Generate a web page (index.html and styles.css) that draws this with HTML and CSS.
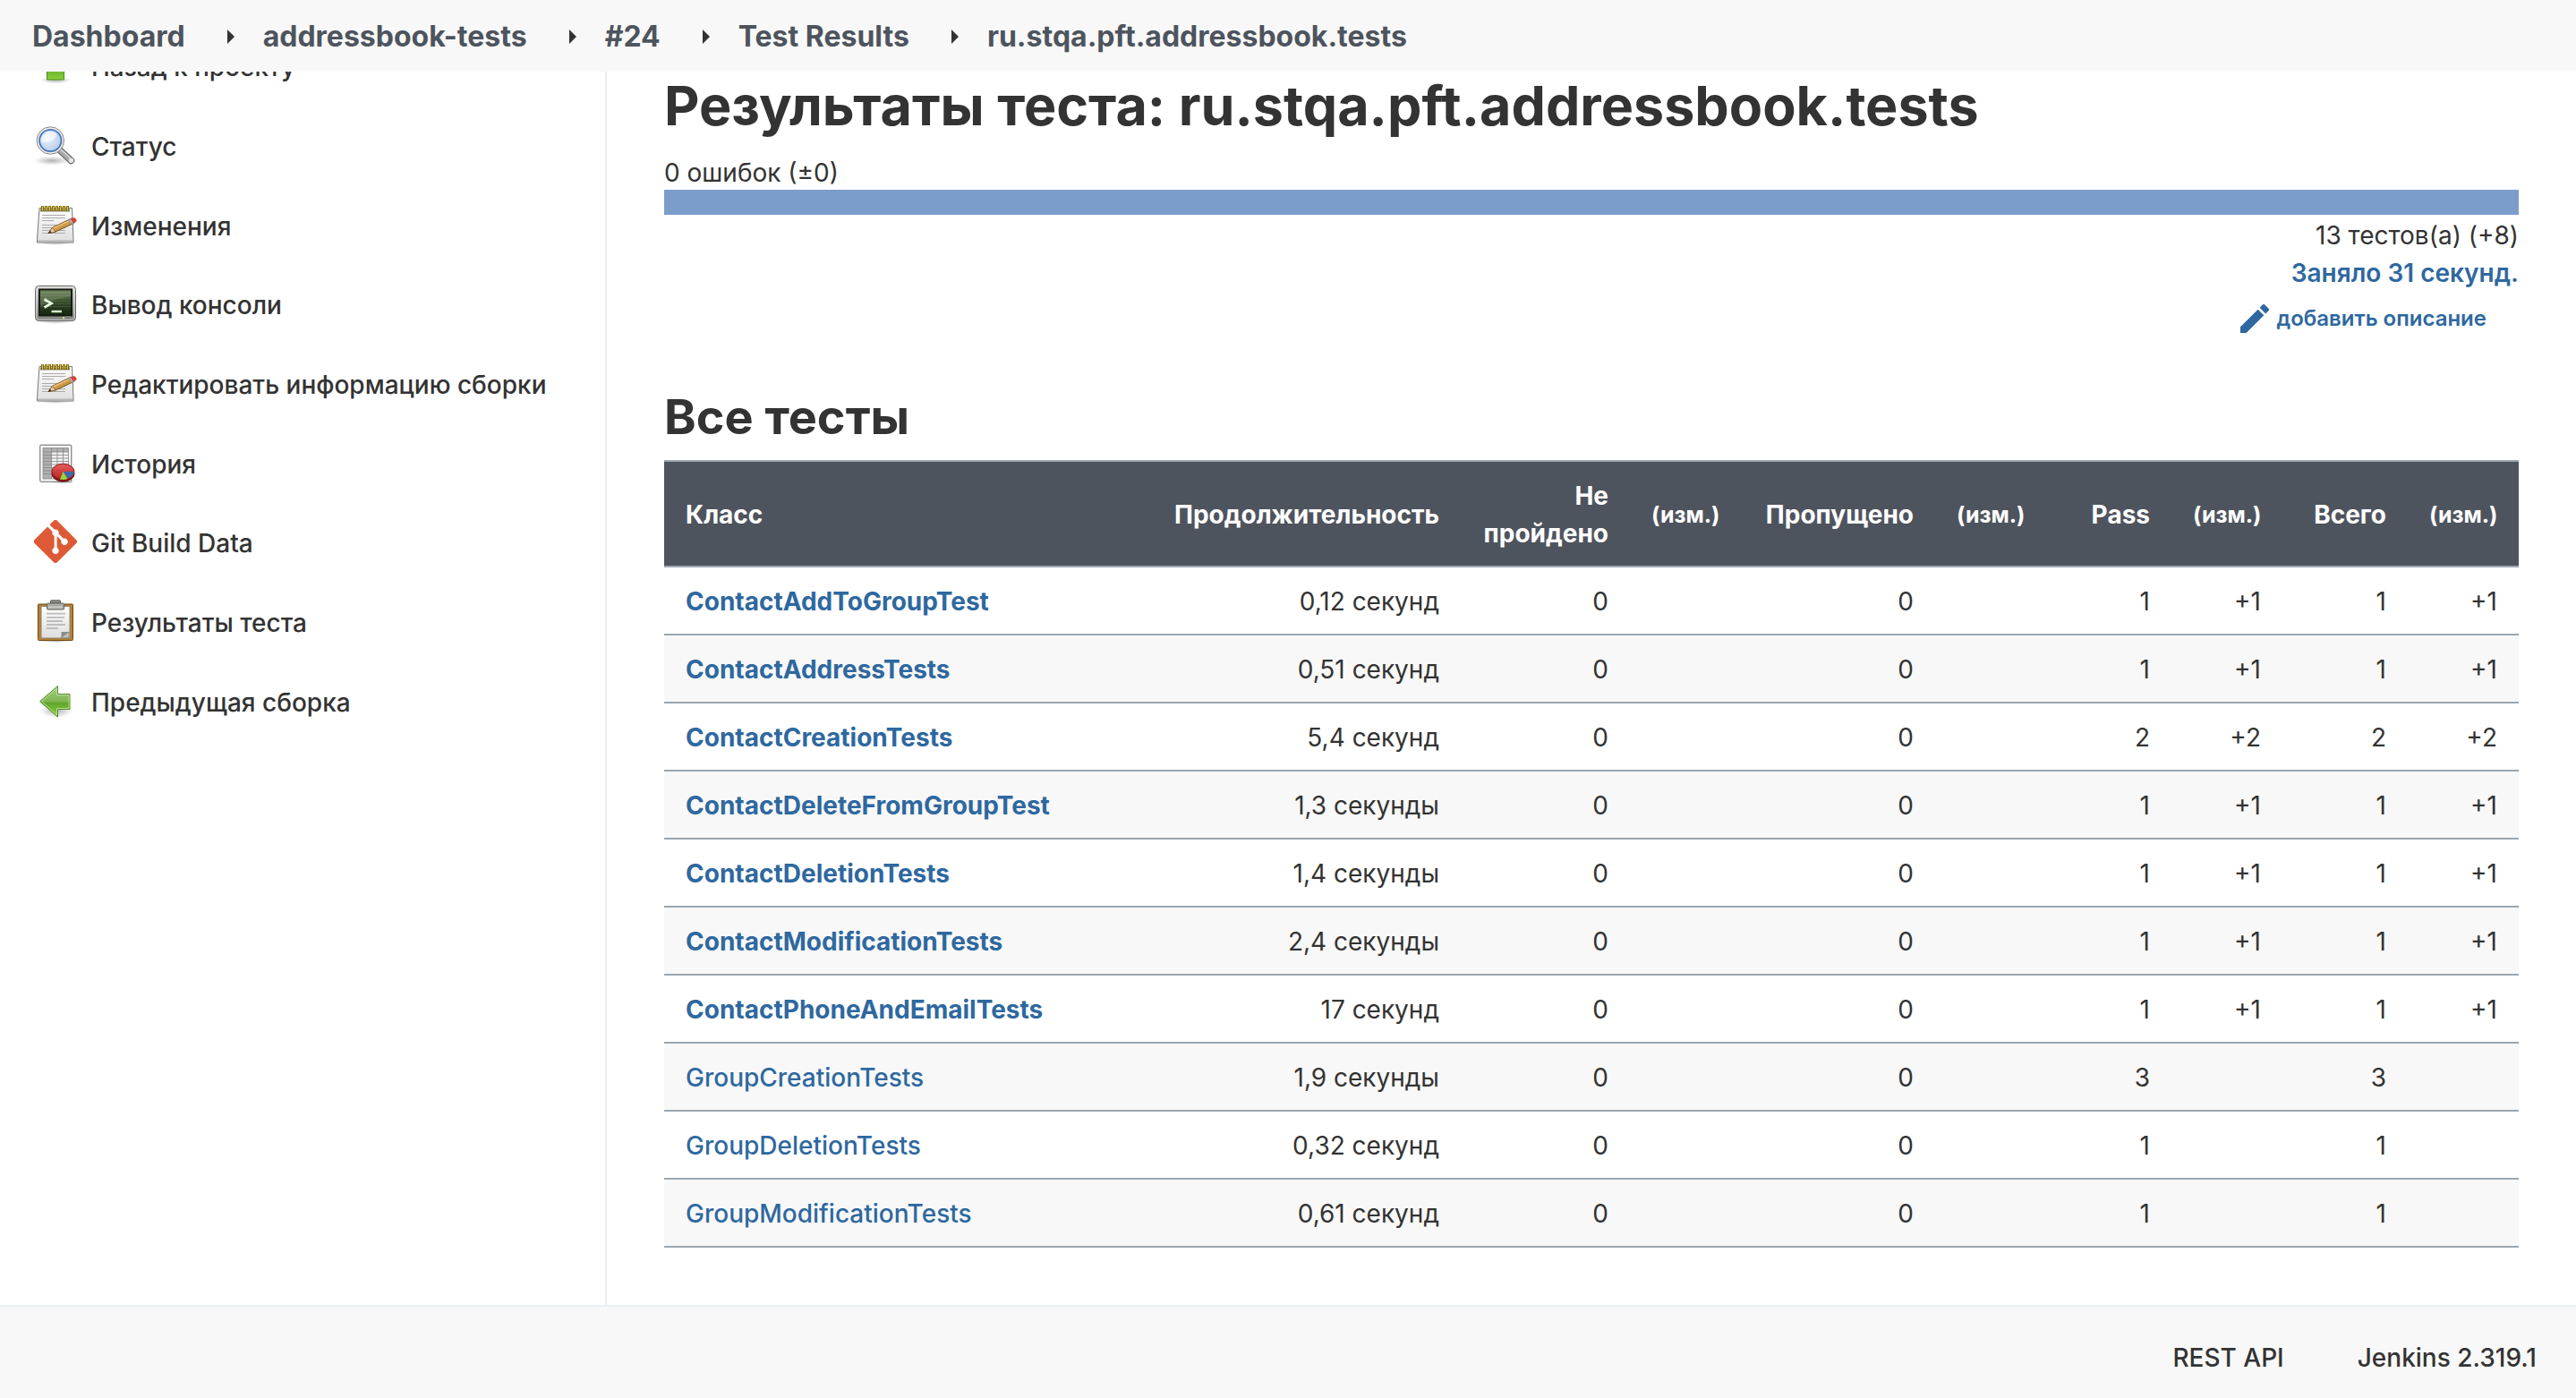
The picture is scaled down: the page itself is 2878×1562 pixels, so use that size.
FILE: index.html
```html
<!DOCTYPE html>
<html lang="ru">
<head>
<meta charset="utf-8">
<title>Результаты теста: ru.stqa.pft.addressbook.tests [Jenkins]</title>
<link rel="stylesheet" href="styles.css">
</head>
<body>
<svg class="defs" aria-hidden="true">
  <defs>
    <linearGradient id="g-green" x1="0" y1="0" x2="0" y2="1"><stop offset="0" stop-color="#a5cf80"/><stop offset=".5" stop-color="#7fb552"/><stop offset=".55" stop-color="#62a52b"/><stop offset="1" stop-color="#86d03c"/></linearGradient>
    <linearGradient id="g-paper" x1="0" y1="0" x2="0" y2="1"><stop offset="0" stop-color="#fdfdfd"/><stop offset="1" stop-color="#dedede"/></linearGradient>
    <linearGradient id="g-frame" x1="0" y1="0" x2="0" y2="1"><stop offset="0" stop-color="#d9d9d6"/><stop offset="1" stop-color="#82847e"/></linearGradient>
    <linearGradient id="g-screen" x1="0" y1="0" x2="0" y2="1"><stop offset="0" stop-color="#5f7a48"/><stop offset=".5" stop-color="#33482a"/><stop offset="1" stop-color="#16240f"/></linearGradient>
    <radialGradient id="g-lens" cx=".4" cy=".4" r=".6"><stop offset="0" stop-color="#eef3fa"/><stop offset="1" stop-color="#b9cdea"/></radialGradient>
    <radialGradient id="g-shadow"><stop offset="0" stop-color="#000" stop-opacity=".3"/><stop offset="1" stop-color="#000" stop-opacity="0"/></radialGradient>
    <linearGradient id="g-pie" x1="0" y1="0" x2="0" y2="1"><stop offset="0" stop-color="#e56060"/><stop offset="1" stop-color="#b81f1f"/></linearGradient>
    <symbol id="i-notepad" viewBox="0 0 48 48">
      <ellipse cx="24" cy="44" rx="20" ry="3" fill="url(#g-shadow)"/>
      <path d="M6 5.500h36.500l1.500 35v3.500H3.500v-3.500z" fill="url(#g-paper)" stroke="#77777a"/>
      <path d="M4 41.500h39.500v2H4z" fill="#b5b5b5"/>
      <path d="M9 13.500h26M9 16.500h26M9 19.500h13M9 24.500h26M9 27.500h26M9 30.500h26M9 33.500h26" stroke="#ababab"/>
      <path d="M7 6.500h33v3H7z" fill="#8b8b86"/>
      <path d="M9.500 3v6M13.500 3v6M17.500 3v6M21.500 3v6M25.500 3v6M29.500 3v6M33.500 3v6M37.500 3v6" stroke="#7c6508" stroke-width="3"/>
      <path d="M9.500 3.500v5M13.500 3.500v5M17.500 3.500v5M21.500 3.500v5M25.500 3.500v5M29.500 3.500v5M33.500 3.500v5M37.500 3.500v5" stroke="#e9cf3e"/>
      <path d="M16 33.500l4.500-6.200L41 17.500l3.500 4.800L24 32z" fill="#d09a45" stroke="#70481a"/>
      <path d="M21 28.200L41 18.800" stroke="#efc98a" stroke-width="1.300"/>
      <path d="M16 33.500l4.500-6.200L24 32z" fill="#ead1a8" stroke="#70481a" stroke-width=".7"/>
      <path d="M16 33.500l2-2.700 1.300 1.700z" fill="#222"/>
      <path d="M38.500 18.700l2.500-1.200 3.500 4.800-2.500 1.200z" fill="#b7b7b7" stroke="#777" stroke-width=".6"/>
      <path d="M41 17.500l2.500-1c2.500-.8 5 2.800 3 4.500l-2 1.300z" fill="#e63a35" stroke="#a85a50" stroke-width=".7"/>
    </symbol>
  </defs>
</svg>

<header class="breadcrumbs">
  <nav aria-label="Breadcrumb">
    <ol class="crumbs">
      <li><a href="#">Dashboard</a></li>
      <li><a href="#">addressbook-tests</a></li>
      <li><a href="#">#24</a></li>
      <li><a href="#">Test Results</a></li>
      <li><a href="#">ru.stqa.pft.addressbook.tests</a></li>
    </ol>
  </nav>
</header>

<div class="page">
  <nav class="side" aria-label="Tasks">
    <ul class="tasks">
      <li><a href="#"><svg class="icon" viewBox="0 0 48 48"><ellipse cx="24" cy="40.500" rx="17" ry="4" fill="url(#g-shadow)"/><path d="M24 6l18 18h-8.500v16h-19V24H6z" fill="url(#g-green)" stroke="#4f8a1e"/></svg><span>Назад к проекту</span></a></li>
      <li><a href="#"><svg class="icon" viewBox="0 0 48 48"><ellipse cx="20" cy="41.500" rx="20" ry="5" fill="url(#g-shadow)"/><path d="M28.500 29.500l13 12" stroke="#5f5f5f" stroke-width="7.500" stroke-linecap="round"/><path d="M28.500 29.500l13 12" stroke="#a9a9a9" stroke-width="5.500" stroke-linecap="round"/><path d="M29 28l11.500 10.500" stroke="#dadada" stroke-width="1.500"/><circle cx="41.500" cy="41.300" r="2.700" fill="#e6e6e6"/><circle cx="18.300" cy="19" r="15.200" fill="#f1f1f1" stroke="#858585"/><circle cx="18.300" cy="19" r="12.200" fill="url(#g-lens)" stroke="#4a76b8" stroke-width="1.800"/><path d="M8.500 21a10 10 0 0 1 17-9c-1 6-8 10-17 9z" fill="#fff" opacity=".55"/></svg><span>Статус</span></a></li>
      <li><a href="#"><svg class="icon"><use href="#i-notepad"/></svg><span>Изменения</span></a></li>
      <li><a href="#"><svg class="icon" viewBox="0 0 48 48"><ellipse cx="24" cy="43.500" rx="21" ry="3.500" fill="url(#g-shadow)"/><rect x="1.500" y="4.500" width="45" height="39" rx="4" fill="url(#g-frame)" stroke="#666862"/><rect x="2.700" y="5.700" width="42.600" height="36.600" rx="3" fill="none" stroke="#eee" stroke-opacity=".7"/><rect x="6" y="8.500" width="36" height="29" fill="url(#g-screen)" stroke="#161a14" stroke-width="2"/><path d="M7 12.500h34M7 15.500h34M7 18.500h34M7 21.500h34M7 24.500h34M7 27.500h34" stroke="#a8c48c" stroke-opacity=".18"/><path d="M7 9.500h34v7c-12 1-22 4-34 11z" fill="#fff" opacity=".14"/><path d="M11.500 19.500l8 4.500-8 4.500" fill="none" stroke="#e9fbe2" stroke-width="2.600"/><path d="M19.500 33h11.500" stroke="#d5efcb" stroke-width="2.500"/><rect x="32" y="39" width="2" height="2" fill="#c9f57a"/><rect x="36" y="38.800" width="4" height="2.500" fill="#777" stroke="#999" stroke-width=".6"/></svg><span>Вывод консоли</span></a></li>
      <li><a href="#"><svg class="icon"><use href="#i-notepad"/></svg><span>Редактировать информацию сборки</span></a></li>
      <li><a href="#"><svg class="icon" viewBox="0 0 48 48"><ellipse cx="32" cy="45" rx="14" ry="3" fill="url(#g-shadow)"/><rect x="6.800" y="4.200" width="35" height="41" rx="1" fill="#fcfcfc" stroke="#626262"/><rect x="10" y="7.500" width="28.500" height="34.500" fill="#f0f0f0"/><path d="M10 7.500h28.500V12H19.500v30H10z" fill="#b0b0b0"/><path d="M10 7.500h28.500V42H10zM10 12h28.500M10 15.500h28.500M10 19h28.500M10 22.500h28.500M10 26h28.500M10 29.500h28.500M10 33h28.500M10 36.500h28.500M19.500 7.500V42M26 7.500V42M32.500 7.500V42" fill="none" stroke="#868686" stroke-width=".8"/><ellipse cx="32.500" cy="36.200" rx="12.500" ry="8.800" fill="#8f1414" stroke="#6d1010"/><ellipse cx="32.500" cy="34" rx="12.500" ry="8.800" fill="url(#g-pie)" stroke="#8b1a1a"/><path d="M32.500 34H44.500c0 3-2.500 6-6 7.600z" fill="#3d68ad"/><path d="M32.500 34l5 8c-2.500 1.200-5.500 1.300-8.500.6z" fill="#8bdb3d"/></svg><span>История</span></a></li>
      <li><a href="#"><svg class="icon" viewBox="0 0 92 92"><path fill="#de5a37" d="M90.155 41.965L50.036 1.847a5.918 5.918 0 0 0-8.369 0l-8.330 8.332L43.904 20.746a7.030 7.030 0 0 1 7.230 1.684 7.034 7.034 0 0 1 1.669 7.277l10.187 10.184a7.028 7.028 0 0 1 7.278 1.672 7.040 7.040 0 1 1-11.610 2.291L49.158 34.353v25.003a7.042 7.042 0 1 1-5.814-.2V33.922a7.040 7.040 0 0 1-3.818-9.234L29.101 14.263 1.595 41.767a5.920 5.920 0 0 0 0 8.371l40.121 40.118a5.919 5.919 0 0 0 8.369 0L90.155 50.335a5.925 5.925 0 0 0 0-8.370"/></svg><span>Git Build Data</span></a></li>
      <li><a href="#"><svg class="icon" viewBox="0 0 48 48"><ellipse cx="24" cy="46" rx="19" ry="2" fill="url(#g-shadow)"/><rect x="4.500" y="5" width="39" height="40.500" rx="1" fill="#b9802f" stroke="#72480f"/><path d="M8 7.500h32V43H8z" fill="url(#g-paper)" stroke="#86867f"/><path d="M14 15.700h21M14 19.800h20M14 24h18M14 28h21M14 32h13" stroke="#bdbdbd" stroke-width="1.800"/><path d="M30.500 42.500v-6.500h8.500z" fill="#8b8c87"/><path d="M30.500 42.500l8.500-6.500v6.500z" fill="#c3c4bf" stroke="#777" stroke-width=".6"/><path d="M18.500 4V1.500q0-.7.700-.7h9.600q.7 0 .7.700V4z" fill="#8d8f88" stroke="#5c5e58"/><rect x="14.500" y="4" width="19" height="7" rx="1" fill="#a9aba4" stroke="#62645e"/><path d="M16 8.500h16" stroke="#c8cac4" stroke-width="2"/></svg><span>Результаты теста</span></a></li>
      <li><a href="#"><svg class="icon" viewBox="0 0 48 48"><ellipse cx="25" cy="35" rx="18" ry="8" fill="url(#g-shadow)"/><path d="M6.500 24.700L26.500 7.500v9H40v17H26.500v8.500z" fill="url(#g-green)" stroke="#4f8a2b"/><path d="M8.500 24.700L25.500 10v7.500H39v15H25.500v7z" fill="none" stroke="#d2efb6" stroke-opacity=".7"/></svg><span>Предыдущая сборка</span></a></li>
    </ul>
  </nav>

  <main class="main">
    <h1>Результаты теста: ru.stqa.pft.addressbook.tests</h1>
    <section class="summary">
      <p>0 ошибок (±0)</p>
      <div class="bar"></div>
      <p class="end">13 тестов(а) (+8)</p>
      <p class="end"><a class="took" href="#">Заняло 31 секунд.</a></p>
      <p class="describe"><a href="#"><svg class="pencil" viewBox="3 3 18 18"><path fill="currentColor" d="M3 17.250V21h3.750L17.810 9.940l-3.750-3.750L3 17.250zM20.710 7.040a.996.996 0 0 0 0-1.410l-2.340-2.340a.996.996 0 0 0-1.410 0l-1.830 1.830 3.750 3.750 1.830-1.830z"/></svg>добавить описание</a></p>
    </section>

    <h2 id="all-tests">Все тесты</h2>
    <table class="results" aria-labelledby="all-tests">
      <colgroup><col><col class="c-time"><col class="c-fail"><col class="c-diff"><col class="c-skip"><col class="c-diff"><col class="c-count"><col class="c-diff"><col class="c-count"><col class="c-diff"></colgroup>
      <thead>
        <tr><th>Класс</th><th>Продолжительность</th><th>Не пройдено</th><th class="diff">(изм.)</th><th>Пропущено</th><th class="diff">(изм.)</th><th>Pass</th><th class="diff">(изм.)</th><th>Всего</th><th class="diff">(изм.)</th></tr>
      </thead>
      <tbody>
        <tr><td><a class="new" href="#">ContactAddToGroupTest</a></td><td>0,12 секунд</td><td>0</td><td></td><td>0</td><td></td><td>1</td><td>+1</td><td>1</td><td>+1</td></tr>
        <tr><td><a class="new" href="#">ContactAddressTests</a></td><td>0,51 секунд</td><td>0</td><td></td><td>0</td><td></td><td>1</td><td>+1</td><td>1</td><td>+1</td></tr>
        <tr><td><a class="new" href="#">ContactCreationTests</a></td><td>5,4 секунд</td><td>0</td><td></td><td>0</td><td></td><td>2</td><td>+2</td><td>2</td><td>+2</td></tr>
        <tr><td><a class="new" href="#">ContactDeleteFromGroupTest</a></td><td>1,3 секунды</td><td>0</td><td></td><td>0</td><td></td><td>1</td><td>+1</td><td>1</td><td>+1</td></tr>
        <tr><td><a class="new" href="#">ContactDeletionTests</a></td><td>1,4 секунды</td><td>0</td><td></td><td>0</td><td></td><td>1</td><td>+1</td><td>1</td><td>+1</td></tr>
        <tr><td><a class="new" href="#">ContactModificationTests</a></td><td>2,4 секунды</td><td>0</td><td></td><td>0</td><td></td><td>1</td><td>+1</td><td>1</td><td>+1</td></tr>
        <tr><td><a class="new" href="#">ContactPhoneAndEmailTests</a></td><td>17 секунд</td><td>0</td><td></td><td>0</td><td></td><td>1</td><td>+1</td><td>1</td><td>+1</td></tr>
        <tr><td><a href="#">GroupCreationTests</a></td><td>1,9 секунды</td><td>0</td><td></td><td>0</td><td></td><td>3</td><td></td><td>3</td><td></td></tr>
        <tr><td><a href="#">GroupDeletionTests</a></td><td>0,32 секунд</td><td>0</td><td></td><td>0</td><td></td><td>1</td><td></td><td>1</td><td></td></tr>
        <tr><td><a href="#">GroupModificationTests</a></td><td>0,61 секунд</td><td>0</td><td></td><td>0</td><td></td><td>1</td><td></td><td>1</td><td></td></tr>
      </tbody>
    </table>
  </main>
</div>

<footer class="footer">
  <a href="#">REST API</a>
  <a href="#">Jenkins 2.319.1</a>
</footer>
</body>
</html>
```
FILE: styles.css
```css
* { box-sizing: border-box; }

body {
  margin: 0;
  min-height: 100vh;
  display: flex;
  flex-direction: column;
  font-family: Inter, "Liberation Sans", sans-serif;
  font-size: 28px;
  line-height: 42px;
  color: #333;
  background: #fff;
}

a { color: #2e689f; text-decoration: none; font-weight: 500; }
p, h1, h2 { margin: 0; }
.defs { position: absolute; width: 0; height: 0; }

/* Stays on top while the page scrolls under it */
.breadcrumbs {
  position: fixed;
  top: 0;
  left: 0;
  right: 0;
  z-index: 1;
  padding: 20px 36px 18px;
  background: #f8f8f8;
}
.crumbs { display: flex; margin: 0; padding: 0; list-style: none; }
.crumbs li { display: flex; align-items: center; }
.crumbs li + li::before {
  content: "";
  margin: 0 32px 0 47px;
  border: 8px solid transparent;
  border-left-color: #333;
  border-right-width: 0;
}
.crumbs a { color: #4d545d; font-size: 32px; font-weight: 700; }

.page { flex: 1; display: flex; }

.side { width: 678px; padding-top: 29px; border-right: 2px solid #e9eef2; }
.tasks {
  display: grid;
  grid-auto-rows: 1fr;
  min-height: 798px;
  margin: 0;
  padding: 0 0 0 38px;
  list-style: none;
}
.tasks a { display: flex; align-items: center; gap: 16px; height: 100%; color: #333; }
.tasks span { padding-top: 4px; }
.icon { width: 48px; height: 48px; flex: none; }

.main { flex: 1; min-width: 0; padding: 82px 64px 64px; }
h1 { font-size: 61px; line-height: 72px; font-weight: 700; margin-bottom: 18px; }
h2 { font-size: 54px; line-height: 64px; font-weight: 700; margin: 46px 0 16px; }

.bar { height: 28px; margin: -2px 0 2px; background: #7c9dcb; }
.end { text-align: right; }
.took { font-weight: 600; }
.describe { display: flex; justify-content: flex-end; padding: 9px 36px 11px; font-size: 24px; }
.describe a { display: flex; align-items: center; gap: 8px; font-weight: 600; }
.pencil { width: 32px; height: 32px; }

.results { width: 100%; table-layout: fixed; border-collapse: collapse; }
.results th, .results td {
  padding: 17px 24px 15px;
  text-align: right;
  border: 0 solid #9ba6b0;
  border-width: 2px 0;
}
.results th { color: #fff; background: #4e545e; font-weight: 700; }
.results th:first-child, .results td:first-child { text-align: left; }
.results tbody tr:nth-child(even) { background: #f8f8f8; }
.results .diff { font-size: 25px; }
.results .new { font-weight: 700; }
.c-time { width: 345px; }
.c-fail { width: 189px; }
.c-skip { width: 217px; }
.c-count { width: 140px; }
.c-diff { width: 124px; }

.footer {
  display: flex;
  justify-content: flex-end;
  gap: 82px;
  padding: 36px 44px 24px;
  border-top: 2px solid #e9eef2;
  background: #f8f8f8;
}
.footer a { color: #333; }
```
